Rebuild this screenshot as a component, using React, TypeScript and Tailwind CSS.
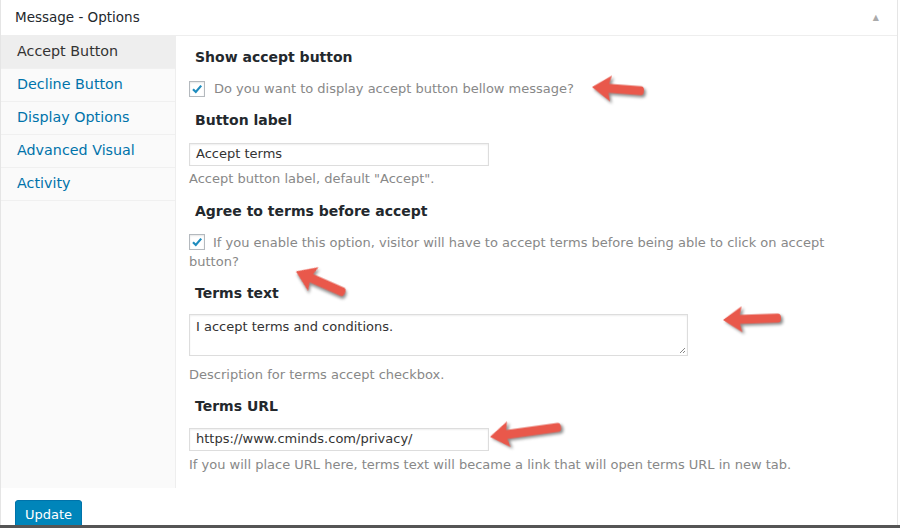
import React from 'react';

const tabs = ['Accept Button', 'Decline Button', 'Display Options', 'Advanced Visual', 'Activity'];

// arrows drawn on top of the screenshot: tip and tail in page pixels
const arrows = [
  { tip: [591, 87], tail: [644, 91] },
  { tip: [295, 271], tail: [345, 293] },
  { tip: [722, 320], tail: [781, 318] },
  { tip: [489, 437], tail: [561, 427] },
];

function Arrow({ tip, tail }: { tip: number[]; tail: number[] }) {
  const dx = tail[0] - tip[0];
  const dy = tail[1] - tip[1];
  const len = Math.sqrt(dx * dx + dy * dy);
  const angle = (Math.atan2(dy, dx) * 180) / Math.PI;
  return (
    <svg
      className="absolute pointer-events-none"
      width={len + 8}
      height={30}
      style={{
        left: tip[0],
        top: tip[1] - 15,
        transformOrigin: '0 15px',
        transform: `rotate(${angle}deg)`,
        filter: 'drop-shadow(2px 2px 1.5px rgba(0,0,0,0.45))',
      }}
    >
      <path
        d={`M1 15 L20 2 L18 10.5 L${len - 3} 10.5 Q${len} 10.5 ${len} 15 Q${len} 19.5 ${len - 3} 19.5 L18 19.5 L20 28 Z`}
        fill="#e9584b"
      />
    </svg>
  );
}

function Check() {
  return (
    <span className="inline-flex items-center justify-center w-4 h-4 border border-[#b4b9be] bg-white shrink-0 shadow-[inset_0_1px_2px_rgba(0,0,0,0.1)]">
      <svg width="12" height="12" viewBox="0 0 12 12">
        <path d="M2 6.2 L4.8 9 L10.2 2.6" stroke="#1e8cbe" strokeWidth="2.2" fill="none" />
      </svg>
    </span>
  );
}

function Heading({ children }: { children: React.ReactNode }) {
  return <h3 className="text-[14px] font-bold text-[#23282d] pl-[6px] leading-[20px]">{children}</h3>;
}

export default function App() {
  return (
    <div
      className="relative w-[900px] h-[528px] overflow-hidden bg-white text-[#444]"
      style={{ fontFamily: '"DejaVu Sans", Verdana, sans-serif' }}
    >
      <div className="h-[526px] border-r border-l border-[#e5e5e5] w-[898px] flex flex-col">
        <div className="h-[36px] shrink-0 flex items-center justify-between px-[14px] border-b border-[#eee]">
          <span className="text-[13.5px] text-[#23282d]">Message - Options</span>
          <span className="text-[#aaa] text-[8px] mr-[4px]">▲</span>
        </div>
        <div className="flex h-[452px] shrink-0">
          <div className="w-[175px] bg-[#fafafa] border-r border-[#eee] shrink-0">
            {tabs.map((t, i) => (
              <div
                key={t}
                className={`h-[33px] flex items-center pl-[16px] text-[14.3px] border-b border-[#f0f0f0] ${
                  i === 0 ? 'bg-[#eee] text-[#333]' : 'text-[#0073aa]'
                }`}
              >
                {t}
              </div>
            ))}
          </div>
          <div className="flex-1 pl-[13px] pt-[11px] text-[13px]">
            <Heading>Show accept button</Heading>
            <div className="flex items-center gap-[9px] mt-[12px] text-[#888]">
              <Check />
              <span>Do you want to display accept button bellow message?</span>
            </div>
            <div className="mt-[11px]">
              <Heading>Button label</Heading>
            </div>
            <div className="mt-[13px] w-[300px] h-[23px] border border-[#ddd] flex items-center px-[6px] text-[#333] shadow-[inset_0_1px_2px_rgba(0,0,0,0.07)]">
              Accept terms
            </div>
            <div className="mt-[3px] text-[#888]">Accept button label, default "Accept".</div>
            <div className="mt-[13px]">
              <Heading>Agree to terms before accept</Heading>
            </div>
            <div className="mt-[12px] text-[#888] leading-[19px] pr-[50px]">
              <span className="inline-block align-top mt-[1px] h-4 mr-[8px]">
                <Check />
              </span>
              If you enable this option, visitor will have to accept terms before being able to click on accept button?
            </div>
            <div className="mt-[12px]">
              <Heading>Terms text</Heading>
            </div>
            <div className="relative mt-[11px] w-[499px] h-[42px] border border-[#ddd] px-[6px] pt-[2px] text-[#333] shadow-[inset_0_1px_2px_rgba(0,0,0,0.07)]">
              I accept terms and conditions.
              <svg className="absolute right-[1px] bottom-[1px]" width="7" height="7" viewBox="0 0 7 7">
                <path d="M1 6 L6 1 M4 6 L6 4" stroke="#888" strokeWidth="1" />
              </svg>
            </div>
            <div className="mt-[9px] text-[#888]">Description for terms accept checkbox.</div>
            <div className="mt-[11px]">
              <Heading>Terms URL</Heading>
            </div>
            <div className="mt-[12px] w-[300px] h-[23px] border border-[#ddd] flex items-center px-[6px] text-[#333] shadow-[inset_0_1px_2px_rgba(0,0,0,0.07)]">
              https://www.cminds.com/privacy/
            </div>
            <div className="mt-[4px] text-[#888]">
              If you will place URL here, terms text will became a link that will open terms URL in new tab.
            </div>
          </div>
        </div>
        <div className="pl-[14px] pt-[12px] shrink-0">
          <button className="h-[30px] px-[9px] bg-[#0085ba] border border-[#0073aa] rounded-[3px] text-white text-[13px] shadow-[0_1px_0_#006799]">
            Update
          </button>
        </div>
      </div>
      <div className="absolute left-0 right-0 bottom-0 h-[3px] bg-[#555]" />
      {arrows.map((a, i) => (
        <Arrow key={i} tip={a.tip} tail={a.tail} />
      ))}
    </div>
  );
}
